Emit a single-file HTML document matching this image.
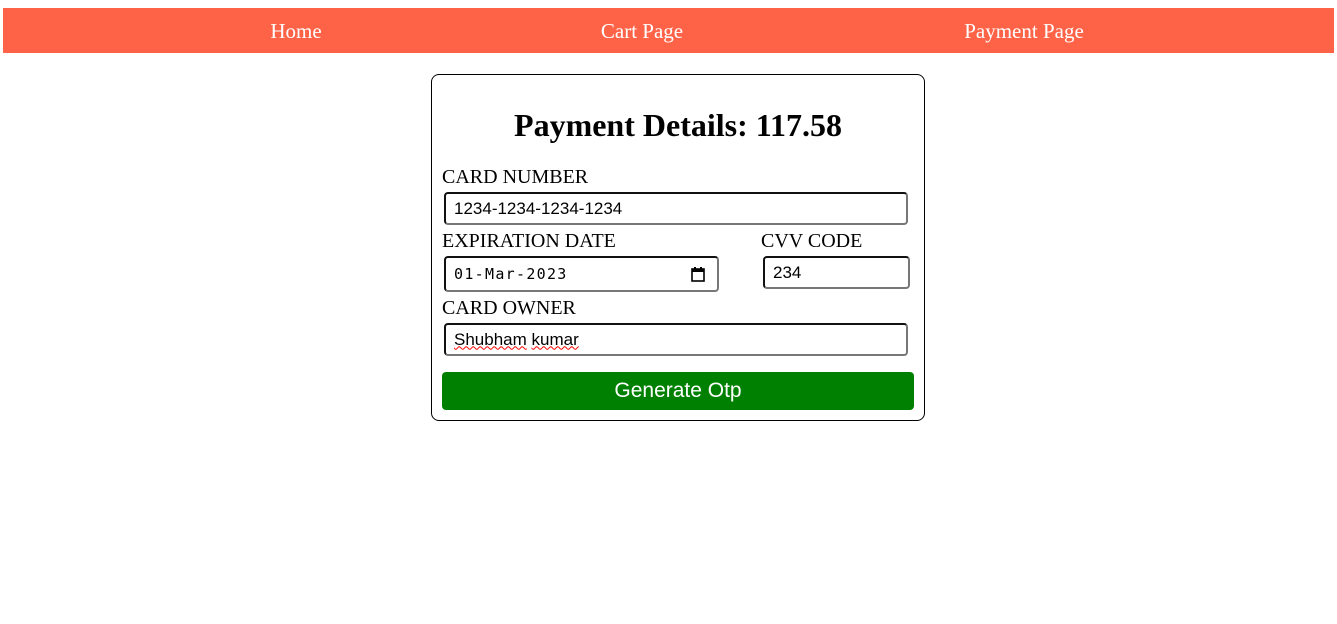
<!DOCTYPE html><html><head><style>
body{margin:0;width:1337px;height:624px;background:#fff;position:relative;font-family:"Liberation Serif",serif;}
.nav{position:absolute;left:3px;top:8px;width:1331px;height:45px;background:#ff6347;}
.nav span{position:absolute;top:11px;color:#fff;font-size:21px;transform:translateX(-50%);}
.card{position:absolute;left:431px;top:74px;width:494px;height:347px;border:1px solid #000;border-radius:8px;box-sizing:border-box;}
.t{position:absolute;left:431px;width:494px;top:107px;text-align:center;font-size:32px;font-weight:bold;}
.l{position:absolute;font-size:20px;top:0}
.i{position:absolute;box-sizing:border-box;border:2px solid;border-color:#111 #777 #777 #111;border-radius:4px;font-family:"Liberation Sans",sans-serif;font-size:17px;padding-left:8px;display:flex;align-items:center;}
.btn{position:absolute;left:442px;top:372px;width:472px;height:38px;background:#008000;border-radius:4px;color:#fff;font-family:"Liberation Sans",sans-serif;font-size:21px;text-align:center;line-height:38px;}
</style></head><body>
<div class="nav"><span style="left:293px">Home</span><span style="left:639px">Cart Page</span><span style="left:1021px">Payment Page</span></div>
<div class="card"></div>
<div class="t">Payment Details: 117.58</div>
<div class="l" style="left:442px;top:166px">CARD NUMBER</div>
<div class="i" style="left:444px;top:192px;width:464px;height:33px">1234-1234-1234-1234</div>
<div class="l" style="left:442px;top:230px">EXPIRATION DATE</div>
<div class="l" style="left:761px;top:230px">CVV CODE</div>
<div class="i" style="left:444px;top:256px;width:275px;height:36px;font-family:'DejaVu Sans Mono',monospace;font-size:15px;letter-spacing:1.3px">01-Mar-2023<svg style="position:absolute;right:12px;top:9px" width="14" height="15" viewBox="0 0 14 15"><rect x="1" y="2" width="12" height="12" fill="none" stroke="#000" stroke-width="1.6"/><rect x="1" y="2" width="12" height="3" fill="#000"/><rect x="3" y="0" width="2" height="3" fill="#000"/><rect x="9" y="0" width="2" height="3" fill="#000"/></svg></div>
<div class="i" style="left:763px;top:256px;width:147px;height:33px">234</div>
<div class="l" style="left:442px;top:297px">CARD OWNER</div>
<div class="i" style="left:444px;top:323px;width:464px;height:33px"><span style="text-decoration:underline wavy red;text-decoration-thickness:1px">Shubham</span>&nbsp;<span style="text-decoration:underline wavy red;text-decoration-thickness:1px">kumar</span></div>
<div class="btn">Generate Otp</div>
</body></html>
